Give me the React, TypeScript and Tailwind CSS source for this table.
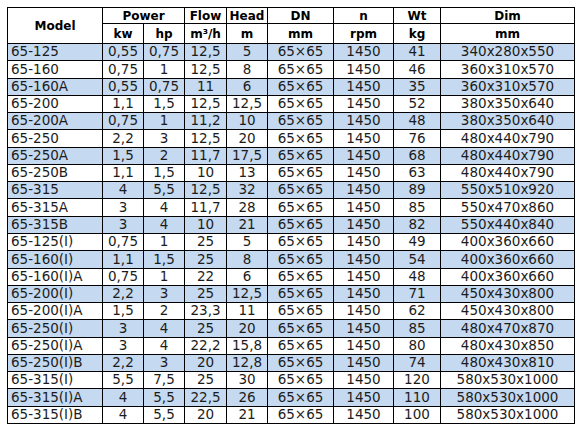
const rows: string[][] = [
  ["65-125", "0,55", "0,75", "12,5", "5", "65×65", "1450", "41", "340x280x550"],
  ["65-160", "0,75", "1", "12,5", "8", "65×65", "1450", "46", "360x310x570"],
  ["65-160A", "0,55", "0,75", "11", "6", "65×65", "1450", "35", "360x310x570"],
  ["65-200", "1,1", "1,5", "12,5", "12,5", "65×65", "1450", "52", "380x350x640"],
  ["65-200A", "0,75", "1", "11,2", "10", "65×65", "1450", "48", "380x350x640"],
  ["65-250", "2,2", "3", "12,5", "20", "65×65", "1450", "76", "480x440x790"],
  ["65-250A", "1,5", "2", "11,7", "17,5", "65×65", "1450", "68", "480x440x790"],
  ["65-250B", "1,1", "1,5", "10", "13", "65×65", "1450", "63", "480x440x790"],
  ["65-315", "4", "5,5", "12,5", "32", "65×65", "1450", "89", "550x510x920"],
  ["65-315A", "3", "4", "11,7", "28", "65×65", "1450", "85", "550x470x860"],
  ["65-315B", "3", "4", "10", "21", "65×65", "1450", "82", "550x440x840"],
  ["65-125(I)", "0,75", "1", "25", "5", "65×65", "1450", "49", "400x360x660"],
  ["65-160(I)", "1,1", "1,5", "25", "8", "65×65", "1450", "54", "400x360x660"],
  ["65-160(I)A", "0,75", "1", "22", "6", "65×65", "1450", "48", "400x360x660"],
  ["65-200(I)", "2,2", "3", "25", "12,5", "65×65", "1450", "71", "450x430x800"],
  ["65-200(I)A", "1,5", "2", "23,3", "11", "65×65", "1450", "62", "450x430x800"],
  ["65-250(I)", "3", "4", "25", "20", "65×65", "1450", "85", "480x470x870"],
  ["65-250(I)A", "3", "4", "22,2", "15,8", "65×65", "1450", "80", "480x430x850"],
  ["65-250(I)B", "2,2", "3", "20", "12,8", "65×65", "1450", "74", "480x430x810"],
  ["65-315(I)", "5,5", "7,5", "25", "30", "65×65", "1450", "120", "580x530x1000"],
  ["65-315(I)A", "4", "5,5", "22,5", "26", "65×65", "1450", "110", "580x530x1000"],
  ["65-315(I)B", "4", "5,5", "20", "21", "65×65", "1450", "100", "580x530x1000"],
];

const widths = ["w-[95px]", "w-[41px]", "w-[41px]", "w-[42px]", "w-[41px]", "w-[66px]", "w-[60px]", "w-[47px]", "w-[134px]"];

const th = "border border-black font-bold text-[12px] text-black text-center leading-none p-0";

function rowHeight(i: number) {
  const h = Math.round(43 + ((i + 1) * 380) / 22) - Math.round(43 + (i * 380) / 22);
  return h === 18 ? "h-[18px]" : "h-[17px]";
}

export default function App() {
  return (
    <div className="w-[580px] h-[430px] bg-white pl-[7px] pt-[7px] font-['DejaVu_Sans',Verdana,sans-serif]">
      <table className="table-fixed border-collapse w-[568px]">
        <colgroup>
          {widths.map((w, i) => (
            <col key={i} className={w} />
          ))}
        </colgroup>
        <thead>
          <tr className="h-[16px]">
            <th rowSpan={2} className={th}>Model</th>
            <th colSpan={2} className={th}>Power</th>
            <th className={th}>Flow</th>
            <th className={th}>Head</th>
            <th className={th}>DN</th>
            <th className={th}>n</th>
            <th className={th}>Wt</th>
            <th className={th}>Dim</th>
          </tr>
          <tr className="h-[20px]">
            <th className={th}>kw</th>
            <th className={th}>hp</th>
            <th className={th}>m³/h</th>
            <th className={th}>m</th>
            <th className={th}>mm</th>
            <th className={th}>rpm</th>
            <th className={th}>kg</th>
            <th className={th}>mm</th>
          </tr>
        </thead>
        <tbody>
          {rows.map((r, i) => (
            <tr key={r[0]} className={`${rowHeight(i)} ${i % 2 === 0 ? "bg-[#c5d9f1]" : "bg-white"}`}>
              {r.map((c, j) => (
                <td
                  key={j}
                  className={`border border-black p-0 text-[13.5px] leading-none text-[#1c1c1c] whitespace-nowrap ${
                    j === 0 ? "text-left pl-[3px]" : "text-center"
                  }`}
                >
                  {c}
                </td>
              ))}
            </tr>
          ))}
        </tbody>
      </table>
    </div>
  );
}
